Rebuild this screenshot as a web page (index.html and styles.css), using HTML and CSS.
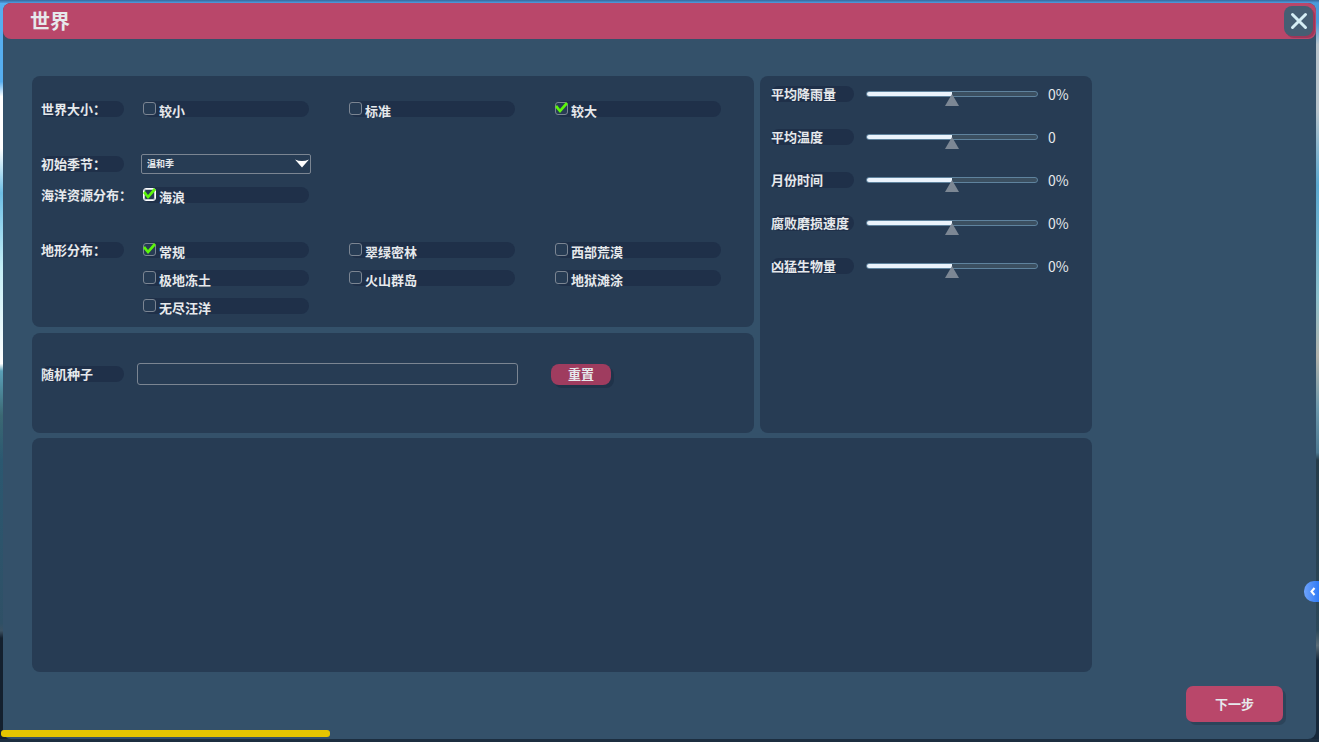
FILE: index.html
```html
<!DOCTYPE html>
<html lang="zh-CN">
<head>
<meta charset="utf-8">
<meta name="viewport" content="width=device-width, initial-scale=1">
<title>世界</title>
<link rel="stylesheet" href="styles.css">
</head>
<body>
<main class="window">
  <header class="titlebar">
    <h1 class="title">世界</h1>
    <button class="close" type="button" aria-label="关闭">
      <svg width="18" height="18" viewBox="0 0 18 18" aria-hidden="true"><path d="M2.5 2.5 15.5 15.5M15.5 2.5 2.5 15.5"/></svg>
    </button>
  </header>

  <form class="content">
    <div class="columns">
      <div class="stack">
        <section class="panel world">
          <div class="row" role="group" aria-labelledby="size-label">
            <span class="label" id="size-label">世界大小：</span>
            <div class="options">
              <label class="option"><input class="check" type="checkbox"><span class="option-text">较小</span></label>
              <label class="option"><input class="check" type="checkbox"><span class="option-text">标准</span></label>
              <label class="option"><input class="check" type="checkbox" checked><span class="option-text">较大</span></label>
            </div>
          </div>
          <div class="group">
            <div class="row row-select">
              <label class="label" for="season">初始季节：</label>
              <div class="options">
                <div class="select-box">
                  <select class="select" id="season"><option>温和季</option></select>
                  <svg class="arrow" width="14" height="9" viewBox="0 0 14 9" aria-hidden="true"><path d="M0 .5Q3.500 2 7 2T14 .5L7 8.500Z"/></svg>
                </div>
              </div>
            </div>
            <div class="row" role="group" aria-labelledby="ocean-label">
              <span class="label label-plain" id="ocean-label">海洋资源分布：</span>
              <div class="options">
                <label class="option"><input class="check check-strong" type="checkbox" checked><span class="option-text">海浪</span></label>
              </div>
            </div>
          </div>
          <div class="row" role="group" aria-labelledby="terrain-label">
            <span class="label" id="terrain-label">地形分布：</span>
            <div class="options">
              <label class="option"><input class="check" type="checkbox" checked><span class="option-text">常规</span></label>
              <label class="option"><input class="check" type="checkbox"><span class="option-text">翠绿密林</span></label>
              <label class="option"><input class="check" type="checkbox"><span class="option-text">西部荒漠</span></label>
              <label class="option"><input class="check" type="checkbox"><span class="option-text">极地冻土</span></label>
              <label class="option"><input class="check" type="checkbox"><span class="option-text">火山群岛</span></label>
              <label class="option"><input class="check" type="checkbox"><span class="option-text">地狱滩涂</span></label>
              <label class="option"><input class="check" type="checkbox"><span class="option-text">无尽汪洋</span></label>
            </div>
          </div>
        </section>

        <section class="panel seed">
          <label class="label" for="seed">随机种子</label>
          <input class="seed-input" id="seed" type="text">
          <button class="reset" type="button">重置</button>
        </section>
      </div>

      <section class="panel sliders">
        <div class="slider-row"><label class="label" for="rain">平均降雨量</label><input class="slider" id="rain" type="range" min="-100" max="100" value="0"><output class="value" for="rain">0%</output></div>
        <div class="slider-row"><label class="label" for="temp">平均温度</label><input class="slider" id="temp" type="range" min="-100" max="100" value="0"><output class="value" for="temp">0</output></div>
        <div class="slider-row"><label class="label" for="month">月份时间</label><input class="slider" id="month" type="range" min="-100" max="100" value="0"><output class="value" for="month">0%</output></div>
        <div class="slider-row"><label class="label" for="decay">腐败磨损速度</label><input class="slider" id="decay" type="range" min="-100" max="100" value="0"><output class="value" for="decay">0%</output></div>
        <div class="slider-row"><label class="label" for="beasts">凶猛生物量</label><input class="slider" id="beasts" type="range" min="-100" max="100" value="0"><output class="value" for="beasts">0%</output></div>
      </section>
    </div>
    <section class="panel info"></section>
  </form>

  <footer class="footer">
    <button class="next" type="button">下一步</button>
  </footer>
</main>

<div class="progress"><div class="progress-bar"></div></div>
<button class="drawer" type="button" aria-label="展开">
  <svg width="6" height="9" viewBox="0 0 6 9" aria-hidden="true"><path d="M4.500 1 1.500 4.500 4.500 8"/></svg>
</button>
</body>
</html>
```

FILE: styles.css
```css
:root {
  --window: #34516a;
  --panel: #273c54;
  --pill: #1f3049;
  --pink: #b9476a;
  --line: #7b8592;
  --text: #e6e9ec;
}

* {
  box-sizing: border-box;
}

body {
  position: relative;
  display: flex;
  min-height: 100vh;
  margin: 0;
  padding: 3px;
  color: var(--text);
  font: 700 13px/16px "Noto Sans CJK SC", sans-serif;
  background:
    linear-gradient(#35689c, #4f9ee0) top / 100% 3px no-repeat,
    linear-gradient(#1c2e40, #1c2e40) bottom / 100% 3px no-repeat,
    linear-gradient(#56aef0 0 11%, #ffffff 13% 20%, #6dbfe6 26%, #c4eef6 36%, #ffffff 49%, #5aa0b8 50%, #3b6873 56%, #2b5870 62%, #2f5066 84%, #3b5163 85%, #14202e 86%) left / 50% 100% no-repeat,
    linear-gradient(#4a9cdc 0 3%, #b8c4cc 6% 15%, #5aa8d0 25%, #8cc0cc 40%, #b3b3ac 48%, #6c98ac 55%, #4c7890 61%, #263c4a 62%, #2c485a 85%, #596b76 87%, #16283a 89%) right / 50% 100% no-repeat;
}

button,
input,
select {
  margin: 0;
  color: inherit;
  font: inherit;
}

button {
  padding: 0;
  border: 0;
  cursor: pointer;
}

.window {
  display: flex;
  flex: 1;
  flex-direction: column;
  border-radius: 8px;
  background: var(--window);
}

.titlebar {
  display: flex;
  align-items: center;
  justify-content: space-between;
  height: 36px;
  padding: 0 3px 0 27px;
  border-radius: 8px;
  background: var(--pink);
}

.title {
  margin: 0;
  font-size: 20px;
  line-height: 28px;
}

.close {
  display: grid;
  place-items: center;
  width: 29px;
  height: 30px;
  border-radius: 8px;
  background: #455e73;
  box-shadow: 2px 2px 0 #9d3759;
}

.close path {
  fill: none;
  stroke: #d5eef5;
  stroke-width: 3;
  stroke-linecap: round;
}

.content {
  display: flex;
  flex: 1;
  flex-direction: column;
  gap: 5px;
  padding: 37px 224px 0 29px;
}

.columns {
  display: grid;
  grid-template-columns: 722fr 332fr;
  gap: 6px;
}

.stack {
  display: flex;
  flex-direction: column;
  gap: 6px;
}

.panel {
  border-radius: 8px;
  background: var(--panel);
}

.world {
  display: flex;
  flex-direction: column;
  gap: 37px;
  padding: 25px 33px 13px 9px;
}

.group {
  display: flex;
  flex-direction: column;
  gap: 13px;
  padding-bottom: 2px;
}

.row {
  display: grid;
  grid-template-columns: 83px 1fr;
  column-gap: 19px;
  align-items: start;
}

.row-select {
  align-items: center;
}

.label {
  flex: none;
  width: 83px;
  height: 16px;
  border-radius: 8px;
  background: var(--pill);
  white-space: nowrap;
}

.label-plain {
  background: none;
}

.options {
  display: grid;
  grid-template-columns: repeat(3, 1fr);
  gap: 12px 40px;
}

.option {
  display: flex;
  align-items: center;
  gap: 3px;
  height: 16px;
  border-radius: 8px;
  background: var(--pill);
}

.option-text {
  padding-top: 4px;
}

.check {
  flex: none;
  width: 13px;
  height: 13px;
  margin-bottom: 1px;
  border: 1px solid var(--line);
  border-radius: 3px;
  background: var(--panel);
  appearance: none;
}

.check:checked::before {
  display: block;
  width: 13px;
  height: 12px;
  margin: -1px;
  background: #5cf60a;
  clip-path: polygon(0 5px, 2px 3px, 5px 7px, 11px 0, 13px 2px, 5px 11px);
  content: "";
}

.check-strong {
  border-color: #ffffff;
  box-shadow: inset 0 0 0 1px #c5ccd3;
}

.select-box {
  position: relative;
  margin: 0 -2px;
}

.select {
  display: block;
  width: 100%;
  height: 20px;
  padding: 0 20px 0 5px;
  border: 1px solid var(--line);
  border-radius: 2px;
  background: var(--panel);
  font-size: 9px;
  line-height: 16px;
  appearance: none;
}

.arrow {
  position: absolute;
  top: 5px;
  right: 2px;
  fill: #ffffff;
  pointer-events: none;
}

.seed {
  display: flex;
  flex: 1;
  align-items: center;
  min-height: 100px;
  padding: 0 143px 18px 9px;
}

.seed-input {
  flex: 1;
  min-width: 0;
  height: 22px;
  margin: 0 33px 0 13px;
  padding: 0 6px;
  border: 1px solid var(--line);
  border-radius: 3px;
  background: none;
}

.reset {
  width: 60px;
  height: 21px;
  border-radius: 8px;
  background: #9f3c5f;
  box-shadow: 3px 3px 0 #20334a;
}

.sliders {
  display: flex;
  flex-direction: column;
  gap: 27px;
  padding: 10px 11px;
}

.slider-row {
  display: flex;
  align-items: center;
  height: 16px;
}

.slider {
  flex: 1;
  min-width: 0;
  height: 16px;
  margin: 0 10px 0 12px;
  background: none;
  appearance: none;
}

.slider::-webkit-slider-runnable-track {
  height: 6px;
  border: 1px solid #5f839e;
  border-radius: 3px;
  background: linear-gradient(90deg, #eaf3fc 50%, #3b4f60 50%) border-box;
}

.slider::-webkit-slider-thumb {
  width: 14px;
  height: 12px;
  margin-top: 2px;
  background: #7c8794;
  clip-path: polygon(50% 0, 100% 100%, 0 100%);
  appearance: none;
}

.value {
  width: 33px;
  font-size: 14px;
  font-weight: 400;
}

.info {
  flex: 1;
  min-height: 120px;
}

.footer {
  display: flex;
  justify-content: flex-end;
  padding: 14px 33px 17px;
}

.next {
  width: 97px;
  height: 36px;
  border-radius: 7px;
  background: var(--pink);
  box-shadow: 3px 3px 0 #2c445a;
}

.progress {
  position: absolute;
  right: 3px;
  bottom: 5px;
  left: 1px;
}

.progress-bar {
  width: 25%;
  height: 7px;
  border-radius: 3px;
  background: #e5c500;
}

.drawer {
  position: absolute;
  right: 0;
  bottom: 140px;
  display: grid;
  place-items: center;
  width: 15px;
  height: 21px;
  padding-left: 3px;
  border-radius: 10px 0 0 10px;
  background: linear-gradient(90deg, #6fa3fb, #2f7bf6);
}

.drawer path {
  fill: none;
  stroke: #ffffff;
  stroke-width: 2;
}
```
